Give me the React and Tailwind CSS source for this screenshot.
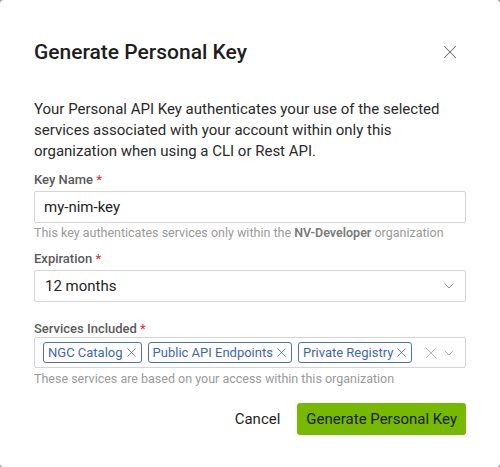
import { X, ChevronDown } from 'lucide-react';

function Label({ children, tight }) {
  return (
    <div className={`text-[13px] font-medium text-[#5a5a5a] leading-4 ${tight ? 'mb-0' : 'mb-[3px]'}`}>
      {children} <span className="text-[#e0393e]">*</span>
    </div>
  );
}

function Chip({ children }) {
  return (
    <span className="flex items-center gap-[1px] h-[21px] pl-[4px] pr-[2px] rounded-[3px] border border-[#4d70bd] text-[#3f66b5] text-[13px] leading-none whitespace-nowrap">
      {children}
      <X className="w-[15px] h-[15px]" strokeWidth={1.3} />
    </span>
  );
}

export default function App() {
  return (
    <div className="w-[500px] h-[467px] bg-[#9a9a9a] font-['Roboto',sans-serif]">
      <div className="w-full h-full bg-white rounded-[4px] pt-[38px] px-[34px]">
        <div className="flex items-center justify-between">
          <h2 className="text-[21px] font-medium text-[#1e1e1e] leading-7">Generate Personal Key</h2>
          <X className="w-[22px] h-[22px] text-[#6b6b6b] mr-[5px]" strokeWidth={1.1} />
        </div>
        <p className="mt-[33px] text-[15px] leading-[21px] text-[#2a2a2a]">
          Your Personal API Key authenticates your use of the selected services associated with your account within only this organization when using a CLI or Rest API.
        </p>

        <div className="mt-[10px]">
          <Label>Key Name</Label>
          <div className="h-[32px] border border-[#d4d4d4] rounded-[2px] flex items-center px-[9px] text-[15px] text-[#1e1e1e]">
            my-nim-key
          </div>
          <div className="mt-[2px] text-[12.5px] text-[#9a9a9a] leading-4 whitespace-nowrap">
            This key authenticates services only within the <span className="font-semibold text-[#7a7a7a]">NV-Developer</span> organization
          </div>
        </div>

        <div className="mt-[10px]">
          <Label>Expiration</Label>
          <div className="h-[32px] border border-[#d4d4d4] rounded-[2px] flex items-center justify-between pl-[10px] pr-[8px] text-[15px] text-[#1e1e1e]">
            12 months
            <ChevronDown className="w-[16px] h-[16px] text-[#7a7a7a]" strokeWidth={1.3} />
          </div>
        </div>

        <div className="mt-[19px]">
          <Label tight>Services Included</Label>
          <div className="h-[31px] border border-[#d4d4d4] rounded-[2px] flex items-center pl-[8px] pr-[8px]">
            <div className="flex gap-[6px]">
              <Chip>NGC Catalog</Chip>
              <Chip>Public API Endpoints</Chip>
              <Chip>Private Registry</Chip>
            </div>
            <div className="ml-auto flex items-center gap-0 text-[#b0b0b0]">
              <X className="w-[20px] h-[20px]" strokeWidth={1.1} />
              <ChevronDown className="w-[16px] h-[16px]" strokeWidth={1.3} />
            </div>
          </div>
          <div className="mt-[3px] text-[12.5px] text-[#9a9a9a] leading-4">
            These services are based on your access within this organization
          </div>
        </div>

        <div className="mt-[16px] flex justify-end items-center gap-[17px]">
          <button className="text-[15px] text-[#1e1e1e] px-[0px]">Cancel</button>
          <button className="h-[32px] px-[9px] rounded-[3px] bg-[#76b900] text-[15px] text-[#1a1a1a]">
            Generate Personal Key
          </button>
        </div>
      </div>
    </div>
  );
}
